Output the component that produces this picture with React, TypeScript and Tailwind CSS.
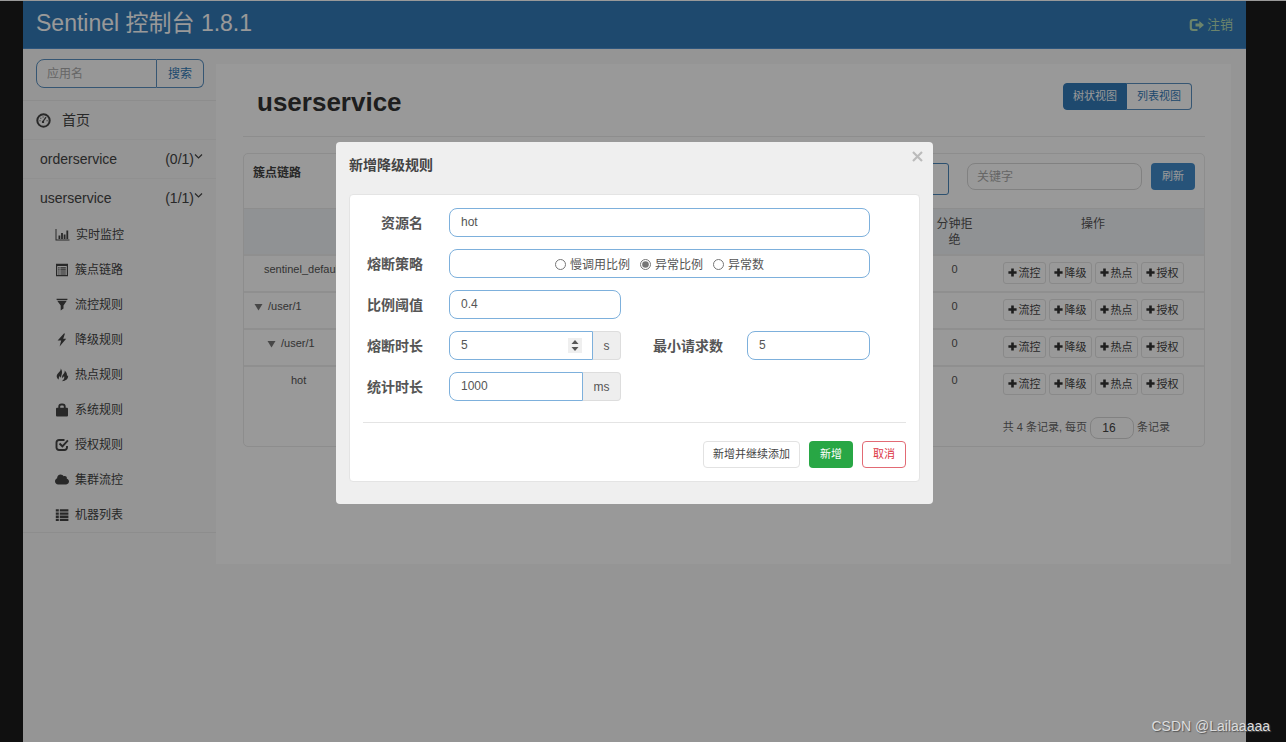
import React from 'react';
import { FaCloud } from 'react-icons/fa';

type IconName = 'stats' | 'listAlt' | 'filter' | 'flash' | 'fire' | 'lock' | 'check' | 'cloud' | 'list';

const svgProps = { width: 14, height: 14, viewBox: '0 0 14 14', fill: 'currentColor', 'aria-hidden': true } as const;

function MenuIcon({ name }: { name: IconName }) {
  switch (name) {
    case 'stats':
      return (
        <svg {...svgProps} className="w-[15px] shrink-0">
          <path d="M0 1h1v10.5h13v1H0zM3 7.5h1.8V11H3zM5.6 5h1.8v6H5.6zM8.2 6.5H10V11H8.2zM10.9 2.5h1.8V11h-1.8z" />
        </svg>
      );
    case 'listAlt':
      return (
        <svg {...svgProps} className="shrink-0">
          <path fillRule="evenodd" d="M1 .8h12v12.4H1zM2.2 3v9h9.6V3z" />
          <path d="M3.2 4.2h1.4v1.2H3.2zM5.4 4.2h5.4v1.2H5.4zM3.2 6.3h1.4v1.2H3.2zM5.4 6.3h5.4v1.2H5.4zM3.2 8.4h1.4v1.2H3.2zM5.4 8.4h5.4v1.2H5.4zM3.2 10.4h1.4v1H3.2zM5.4 10.4h5.4v1H5.4z" />
        </svg>
      );
    case 'filter':
      return (
        <svg {...svgProps} className="shrink-0">
          <path d="M1.6.8h10.8v1.200H1.600zM2.200 2.800h9.600L8.500 7.400v3.200L5.700 12.600V7.400z" />
        </svg>
      );
    case 'flash':
      return (
        <svg {...svgProps} className="shrink-0">
          <path d="M8.900.4 2.600 7.600h3.600L4.600 13.400l6.600-7.600H8.200L10 .4z" />
        </svg>
      );
    case 'fire':
      return (
        <svg {...svgProps} className="shrink-0">
          <path d="M5.700.6c.4 1.900-1.100 3.100-2.600 4.600C1.200 7.200 1 9.700 4 11.600c-.5-1.600-.1-2.700.9-3.700.1.900.4 1.400 1.200 1.700C6.200 7.400 8.400 3.800 5.700.6z" />
          <path d="M9.600 2.600c.5 2-.6 2.800-1.700 4.200-1.200 1.500-.9 2.800-.2 3.500.2-1 .7-1.600 1.400-2 .5 1.700.1 3.300-2.300 5 4.200-.2 7-2.600 6.200-6.200-.3.700-.6 1-1 1.100.2-2.300-.5-4.200-2.400-5.600z" />
        </svg>
      );
    case 'lock':
      return (
        <svg {...svgProps} className="shrink-0">
          <path fillRule="evenodd" d="M3.300 4.800V3.700A3.200 3.200 0 0 1 6.500.5h1a3.200 3.200 0 0 1 3.200 3.200v1.100h1.300a1 1 0 0 1 1 1v6.700a1 1 0 0 1-1 1H2a1 1 0 0 1-1-1V5.800a1 1 0 0 1 1-1zM5.200 4.800h3.600V3.700c0-.8-.5-1.300-1.300-1.300h-1c-.8 0-1.300.5-1.300 1.300z" />
        </svg>
      );
    case 'check':
      return (
        <svg {...svgProps} fill="none" stroke="currentColor" strokeWidth="1.900" className="shrink-0">
          <path d="M9.500 2H4a2.500 2.500 0 0 0-2.500 2.500v5A2.500 2.500 0 0 0 4 12h5.500A2.500 2.500 0 0 0 12 9.500V8" />
          <path d="m4.500 5.500 2.900 2.800L12.900 2.400" />
        </svg>
      );
    case 'cloud':
      return <FaCloud size={13} className="w-[14px] shrink-0" aria-hidden />;
    default:
      return (
        <svg {...svgProps} className="shrink-0">
          <path d="M.8 1.200h3v2.300h-3zM4.800 1.200h8.600v2.300H4.800zM.8 4.400h3v2.300h-3zM4.800 4.400h8.600v2.300H4.800zM.8 7.600h3v2.300h-3zM4.800 7.600h8.600v2.300H4.800zM.8 10.800h3v2.300h-3zM4.800 10.800h8.600v2.300H4.800z" />
        </svg>
      );
  }
}

const menu: { icon: IconName; label: string }[] = [
  { icon: 'stats', label: '实时监控' },
  { icon: 'listAlt', label: '簇点链路' },
  { icon: 'filter', label: '流控规则' },
  { icon: 'flash', label: '降级规则' },
  { icon: 'fire', label: '热点规则' },
  { icon: 'lock', label: '系统规则' },
  { icon: 'check', label: '授权规则' },
  { icon: 'cloud', label: '集群流控' },
  { icon: 'list', label: '机器列表' },
];

const rows = [
  { name: 'sentinel_default', pad: 'pl-[20px]', arrow: false },
  { name: '/user/1', pad: 'pl-[10px]', arrow: true },
  { name: '/user/1', pad: 'pl-[23px]', arrow: true },
  { name: 'hot', pad: 'pl-[47px]', arrow: false },
];

const actions = ['流控', '降级', '热点', '授权'];

function Header() {
  return (
    <header className="flex h-[48px] items-center justify-between border-b border-[#4d8fd0] bg-[#337ab7] px-[13px]">
      <h1 className="pb-[3px] text-[23px] leading-[28px] text-white">Sentinel 控制台 1.8.1</h1>
      <a href="#logout" className="flex items-center gap-[2px] text-[13px] leading-[18px] text-[#b4dcb4]">
        <svg width="16" height="14" viewBox="0 0 16 14" aria-hidden>
          <path d="M8.500 2H4a2.200 2.200 0 0 0-2.200 2.200v5.600A2.200 2.200 0 0 0 4 12h4.500" fill="none" stroke="currentColor" strokeWidth="2.200" />
          <path d="M6.500 5.500h3.800V3l4.700 4-4.700 4V8.500H6.500z" fill="currentColor" />
        </svg>
        注销
      </a>
    </header>
  );
}

function ServiceRow({ name, count }: { name: string; count: string }) {
  return (
    <a href={`#${name}`} className="flex h-[39px] items-center border-t border-[#f0f0f0] pr-[13px] pl-[17px] text-[14px] text-[#444]">
      <span className="grow">{name}</span>
      <span>{count}</span>
      <svg width="9" height="14" viewBox="0 0 9 14" fill="none" stroke="currentColor" strokeWidth="1.200" aria-hidden>
        <path d="m1 2.500 3.500 3.500L8 2.500" />
      </svg>
    </a>
  );
}

function Sidebar() {
  return (
    <aside className="w-[193px] shrink-0">
      <form className="flex pt-[10px] pr-[12px] pb-[12px] pl-[13px]">
        <input
          aria-label="应用名"
          placeholder="应用名"
          className="h-[29px] w-[121px] rounded-l-[8px] border border-[#5a90c0] bg-[#fcfcfc] px-[10px] text-[12px] placeholder:text-[#aaa]"
        />
        <button type="button" className="h-[29px] grow rounded-r-[6px] border border-l-0 border-[#5a90c0] bg-[#fcfcfc] text-[12px] text-[#337ab7]">
          搜索
        </button>
      </form>
      <nav className="border-y border-[#ececec]">
        <a href="#home" className="flex h-[38px] items-center gap-[11px] pl-[13px] text-[14px] text-[#444]">
          <svg width="15" height="15" viewBox="0 0 15 15" aria-hidden>
            <circle cx="7.500" cy="7.500" r="6.200" fill="none" stroke="currentColor" strokeWidth="2" />
            <path d="M7 8.500 10 4.200" stroke="currentColor" strokeWidth="1.300" />
            <circle cx="7" cy="8.900" r="1.200" fill="currentColor" />
            <path d="M3.500 7.200h1v1h-1zM4.300 4.800h1v1h-1zM6.600 3.500h1v1h-1zM10.600 7.200h1v1h-1z" fill="currentColor" />
          </svg>
          首页
        </a>
        <ServiceRow name="orderservice" count="(0/1)" />
        <ServiceRow name="userservice" count="(1/1)" />
        <ul>
          {menu.map((m) => (
            <li key={m.label}>
              <a href={`#${m.icon}`} className="flex h-[35px] items-center gap-[6px] pl-[32px] text-[12px] text-[#444]">
                <MenuIcon name={m.icon} />
                {m.label}
              </a>
            </li>
          ))}
        </ul>
      </nav>
    </aside>
  );
}

function ResourceTable() {
  return (
    <table className="w-full table-fixed border-collapse text-[11px] leading-[16px] text-[#555]">
      <colgroup>
        <col />
        <col className="w-[55px]" />
        <col className="w-[222px]" />
      </colgroup>
      <thead>
        <tr className="h-[46px] border-t border-[#ebebeb] bg-[#f1f4f7] align-top text-[12px] text-[#555]">
          <th aria-label="name" />
          <th className="px-[8px] pt-[7px] font-normal">分钟拒绝</th>
          <th className="pt-[7px] font-normal">操作</th>
        </tr>
      </thead>
      <tbody>
        {rows.map((r, i) => (
          <tr key={i} className="h-[37px] border-t-2 border-[#efefef] align-top">
            <td className={`${r.pad} pt-[5px]`}>
              <span className="flex items-center gap-[5px]">
                {r.arrow && (
                  <svg width="9" height="8" viewBox="0 0 9 8" className="mt-[3px]" aria-hidden>
                    <path d="M.5 1h8l-4 6.500z" fill="#777" />
                  </svg>
                )}
                {r.name}
              </span>
            </td>
            <td className="pt-[5px] text-center">0</td>
            <td>
              <div className="flex justify-center gap-[3px] pt-[6px]">
                {actions.map((a) => (
                  <button
                    key={a}
                    type="button"
                    className="flex h-[22px] w-[43px] items-center justify-center gap-[2px] rounded-[3px] border border-[#e4e4e4] bg-white text-[11px] text-[#444]"
                  >
                    <svg width="9" height="9" viewBox="0 0 9 9" fill="#333" aria-hidden>
                      <path d="M3.200.4h2.600v2.800h2.800v2.600H5.800v2.800H3.200V5.800H.4V3.200h2.800z" />
                    </svg>
                    {a}
                  </button>
                ))}
              </div>
            </td>
          </tr>
        ))}
      </tbody>
    </table>
  );
}

function MainPanel() {
  return (
    <main className="mt-[15px] mr-[15px] h-[500px] min-w-0 grow bg-white pr-[26px] pl-[27px]">
      <div className="flex h-[73px] items-start justify-between border-b border-[#ececec] pt-[19px] pr-[13px] pl-[14px]">
        <h2 className="text-[26px] leading-[38px] font-bold text-[#333]">userservice</h2>
        <div className="flex text-[11px]">
          <button type="button" className="h-[27px] w-[64px] rounded-l-[4px] border border-[#337ab7] bg-[#337ab7] text-white">
            树状视图
          </button>
          <button type="button" className="h-[27px] w-[65px] rounded-r-[4px] border border-l-0 border-[#5a90c0] bg-white text-[#337ab7]">
            列表视图
          </button>
        </div>
      </div>
      <section className="mt-[16px] h-[294px] rounded-[5px] border border-[#ebebeb]">
        <div className="flex h-[54px] items-start px-[9px] pt-[9px]">
          <h3 className="grow pt-[1px] text-[12px] leading-[18px] font-bold text-[#444]">簇点链路</h3>
          <select aria-label="machine" className="mr-[18px] h-[32px] w-[150px] appearance-none rounded-[3px] border border-[#4a85ba] bg-white" />
          <input
            aria-label="关键字"
            placeholder="关键字"
            className="mr-[9px] h-[27px] w-[175px] rounded-[8px] border border-[#d8d8d8] bg-white px-[9px] text-[12px] placeholder:text-[#aaa]"
          />
          <button type="button" className="h-[27px] w-[44px] rounded-[4px] bg-[#428bca] text-[11px] text-white">
            刷新
          </button>
        </div>
        <ResourceTable />
        <div className="flex items-center justify-end gap-[3px] pt-[14px] pr-[34px] text-[11px] text-[#666]">
          <label htmlFor="page-size">共 4 条记录, 每页</label>
          <input id="page-size" defaultValue="16" className="h-[22px] w-[44px] rounded-[8px] border border-[#d8d8d8] bg-white pr-[6px] text-center text-[12px] text-[#444]" />
          <span>条记录</span>
        </div>
      </section>
    </main>
  );
}

function Field({ id, label, children }: { id: string; label: string; children: React.ReactNode }) {
  return (
    <div className="flex h-[29px] items-center">
      <label htmlFor={id} className="w-[60px] shrink-0 pt-[2px] text-right text-[14px] font-bold text-[#555]">
        {label}
      </label>
      <div className="ml-[26px] flex grow items-center">{children}</div>
    </div>
  );
}

function RadioOption({ label, checked }: { label: string; checked?: boolean }) {
  return (
    <label className="flex items-center gap-[4px]">
      <input type="radio" name="strategy" defaultChecked={checked} className="h-[11px] w-[11px] accent-[#767676]" />
      {label}
    </label>
  );
}

function Dialog() {
  return (
    <div role="dialog" aria-labelledby="dialog-title" className="w-[597px] rounded-[4px] bg-[#efefef] px-[13px] pb-[22px]">
      <div className="flex h-[52px] items-start justify-between">
        <h2 id="dialog-title" className="pt-[13px] text-[14px] leading-[20px] font-bold text-[#444]">
          新增降级规则
        </h2>
        <button type="button" aria-label="close" className="mt-[9px] -mr-[3px] text-[#bbb]">
          <svg width="11" height="11" viewBox="0 0 11 11" stroke="currentColor" strokeWidth="2.200" aria-hidden>
            <path d="m1 1 9 9M10 1l-9 9" />
          </svg>
        </button>
      </div>
      <form className="rounded-[4px] border border-[#e4e4e4] bg-white px-[13px] pb-[13px]">
        <div className="flex flex-col gap-[12px] pt-[13px] pr-[36px] pb-[21px] text-[12px] text-[#555]">
          <Field id="resource" label="资源名">
            <input id="resource" defaultValue="hot" className="h-[29px] w-full rounded-[8px] border border-[#7db0dc] px-[11px] pb-[2px]" />
          </Field>
          <Field id="strategy" label="熔断策略">
            <div id="strategy" role="radiogroup" className="flex h-[29px] w-full items-center justify-center gap-[10px] rounded-[8px] border border-[#7db0dc] pt-[2px]">
              <RadioOption label="慢调用比例" />
              <RadioOption label="异常比例" checked />
              <RadioOption label="异常数" />
            </div>
          </Field>
          <Field id="ratio" label="比例阈值">
            <input id="ratio" defaultValue="0.4" className="h-[29px] w-[172px] rounded-[8px] border border-[#7db0dc] px-[11px] pb-[2px]" />
          </Field>
          <Field id="duration" label="熔断时长">
            <div className="flex h-[29px] w-[144px] items-center rounded-l-[8px] border border-[#7db0dc] pr-[10px]">
              <input id="duration" defaultValue="5" className="min-w-0 grow pb-[2px] pl-[11px] outline-none" />
              <svg width="14" height="15" viewBox="0 0 14 15" className="shrink-0" aria-hidden>
                <path d="M0 0h14v15H0z" fill="#efefef" />
                <path d="m7 2 3.500 4h-7zM7 13 3.500 9h7z" fill="#555" />
              </svg>
            </div>
            <span className="flex h-[29px] w-[28px] items-center justify-center rounded-r-[4px] border border-l-0 border-[#ddd] bg-[#eee]">s</span>
            <label htmlFor="minimum" className="w-[102px] pt-[2px] text-right text-[14px] font-bold">
              最小请求数
            </label>
            <input id="minimum" defaultValue="5" className="ml-auto h-[29px] w-[123px] rounded-[8px] border border-[#7db0dc] px-[11px] pb-[2px]" />
          </Field>
          <Field id="interval" label="统计时长">
            <input id="interval" defaultValue="1000" className="h-[29px] w-[134px] rounded-l-[8px] border border-[#7db0dc] px-[11px] pb-[2px]" />
            <span className="flex h-[29px] w-[38px] items-center justify-center rounded-r-[4px] border border-l-0 border-[#ddd] bg-[#eee]">ms</span>
          </Field>
        </div>
        <div className="flex justify-end gap-[9px] border-t border-[#e4e4e4] pt-[18px] text-[11px]">
          <button type="button" className="h-[27px] w-[97px] rounded-[4px] border border-[#e2e2e2] bg-white text-[#444]">
            新增并继续添加
          </button>
          <button type="button" className="h-[27px] w-[44px] rounded-[4px] bg-[#28a745] text-white">
            新增
          </button>
          <button type="button" className="h-[27px] w-[44px] rounded-[4px] border border-[#e26a74] bg-white text-[#dc3545]">
            取消
          </button>
        </div>
      </form>
    </div>
  );
}

export default function App() {
  return (
    <div className="relative flex min-h-screen flex-col border-t border-[#999] bg-[#1c1c1c] pr-[40px] pl-[23px] font-['Liberation_Sans','Noto_Sans_CJK_SC',sans-serif]">
      <div className="flex grow flex-col bg-[#f8f8f8]">
        <Header />
        <div className="flex items-start">
          <Sidebar />
          <MainPanel />
        </div>
      </div>
      <div className="absolute inset-0 flex items-start justify-center bg-black/40 pt-[141px] pr-[17px]">
        <Dialog />
      </div>
      <p className="absolute right-[16px] bottom-[6px] text-[14px] leading-[20px] text-[#dcdcdc] [text-shadow:1px_1px_1px_#555]">CSDN @Lailaaaaa</p>
    </div>
  );
}
